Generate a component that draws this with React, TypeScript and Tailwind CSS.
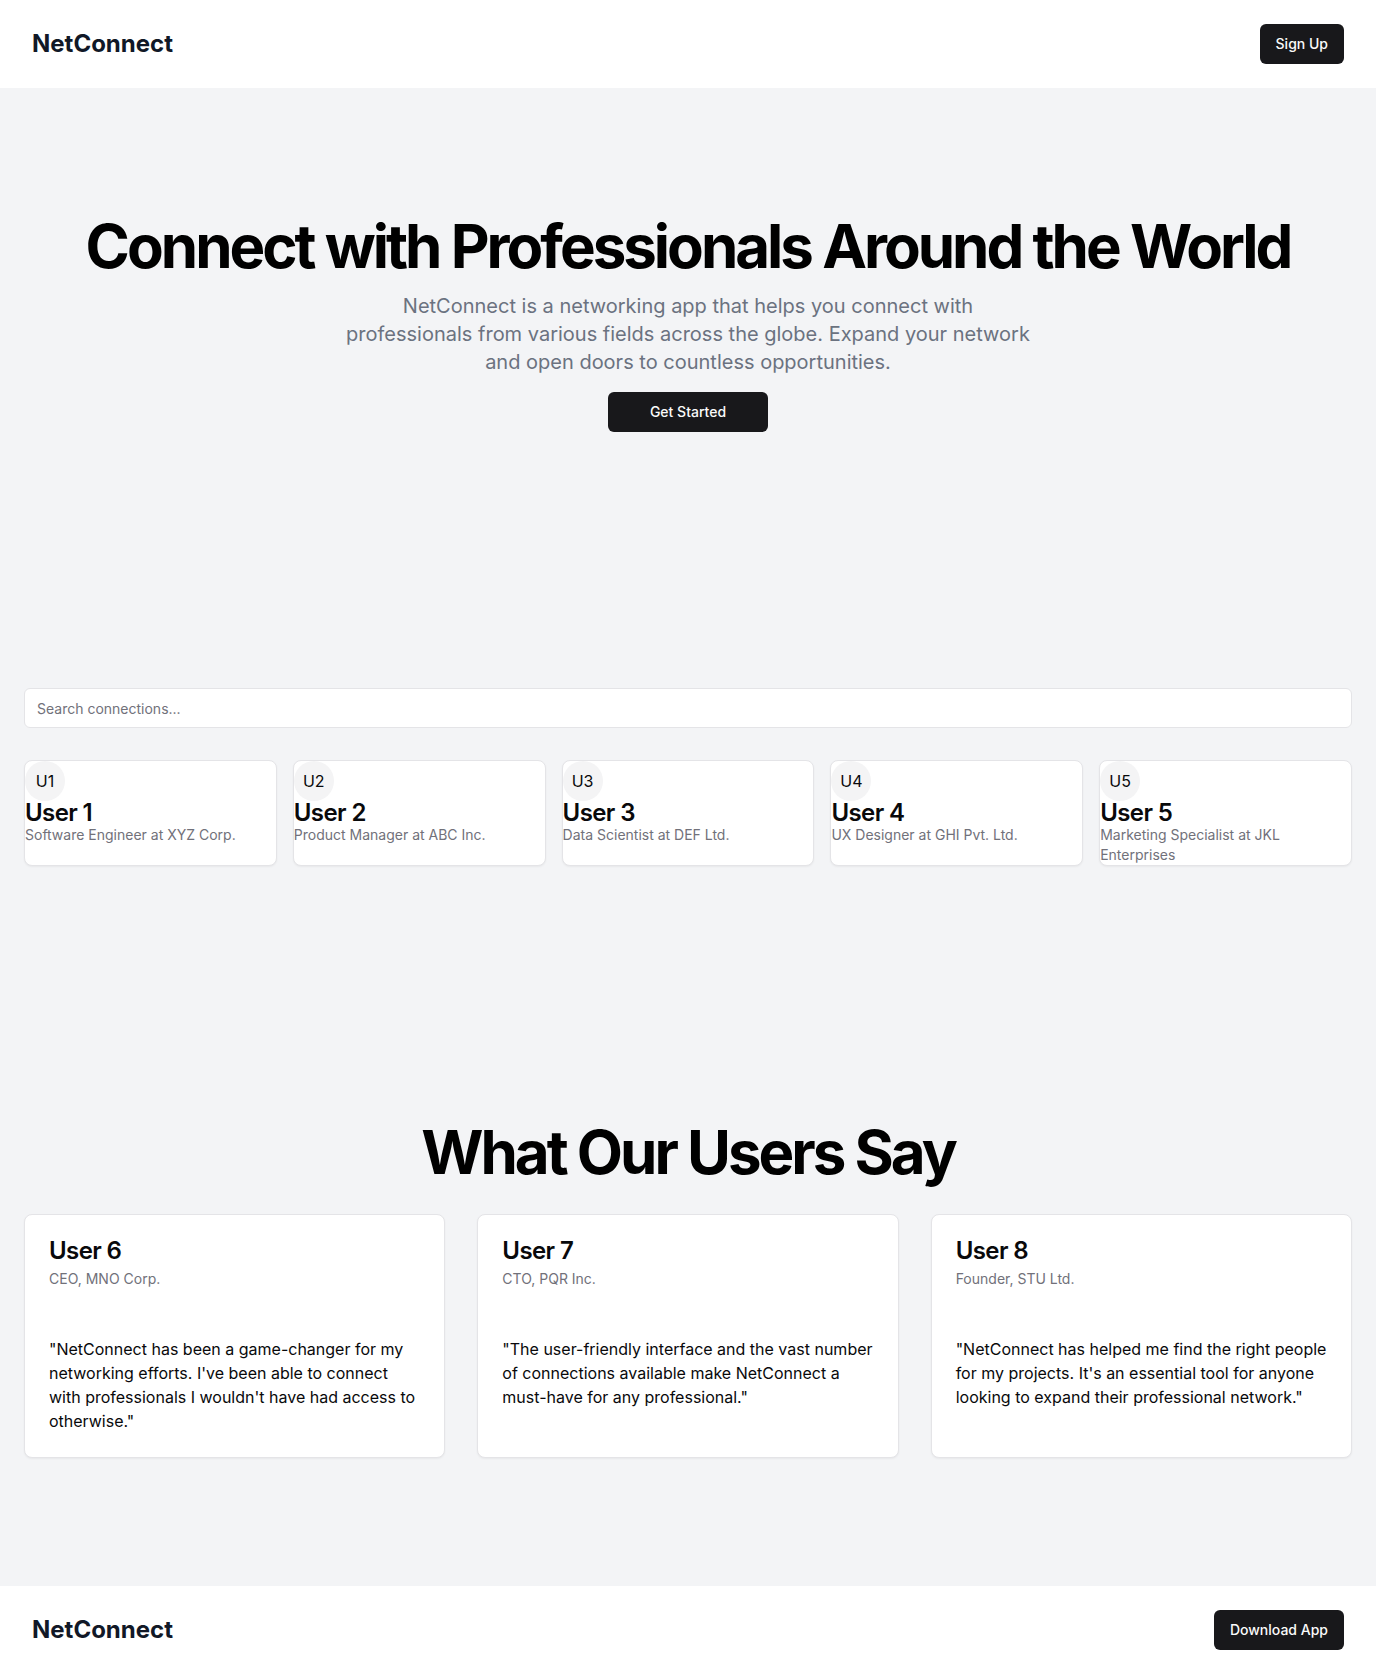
const people = [
  { id: "U1", name: "User 1", role: "Software Engineer at XYZ Corp." },
  { id: "U2", name: "User 2", role: "Product Manager at ABC Inc." },
  { id: "U3", name: "User 3", role: "Data Scientist at DEF Ltd." },
  { id: "U4", name: "User 4", role: "UX Designer at GHI Pvt. Ltd." },
  { id: "U5", name: "User 5", role: "Marketing Specialist at JKL Enterprises" },
];

const testimonials = [
  {
    name: "User 6",
    role: "CEO, MNO Corp.",
    quote:
      "\"NetConnect has been a game-changer for my networking efforts. I've been able to connect with professionals I wouldn't have had access to otherwise.\"",
  },
  {
    name: "User 7",
    role: "CTO, PQR Inc.",
    quote:
      "\"The user-friendly interface and the vast number of connections available make NetConnect a must-have for any professional.\"",
  },
  {
    name: "User 8",
    role: "Founder, STU Ltd.",
    quote:
      "\"NetConnect has helped me find the right people for my projects. It's an essential tool for anyone looking to expand their professional network.\"",
  },
];

const buttonClass =
  "inline-flex h-10 items-center justify-center rounded-md bg-[#18181b] py-2 text-sm font-medium text-[#fafafa]";
const cardClass = "rounded-lg border border-[#e4e4e7] bg-white text-[#09090b] shadow-xs";

export default function App() {
  return (
    <div className="flex flex-col bg-[#f3f4f6] font-['Inter',sans-serif] text-black">
      <header className="flex items-center justify-between bg-white px-8 py-6">
        <h1 className="text-2xl font-bold text-[#111827]">NetConnect</h1>
        <button type="button" className={`${buttonClass} px-4`}>Sign Up</button>
      </header>
      <main>
        <section className="px-6 py-32">
          <div className="flex flex-col items-center gap-4 text-center">
            <h2 className="text-6xl font-bold tracking-tighter">
              Connect with Professionals Around the World
            </h2>
            <p className="max-w-[700px] text-xl text-[#6b7280]">
              NetConnect is a networking app that helps you connect with professionals from various
              fields across the globe. Expand your network and open doors to countless opportunities.
            </p>
            <button type="button" className={`${buttonClass} w-40 px-4`}>Get Started</button>
          </div>
        </section>
        <section className="px-6 py-32">
          <input
            type="search"
            aria-label="Search connections"
            placeholder="Search connections..."
            className="mb-8 block h-10 w-full rounded-md border border-[#e4e4e7] bg-white px-3 py-2 text-sm placeholder:text-[#71717a]"
          />
          <div className="grid grid-cols-5 gap-4">
            {people.map((p) => (
              <article key={p.id} className={cardClass}>
                <div className="flex size-10 items-center justify-center rounded-full bg-[#f4f4f5]">
                  {p.id}
                </div>
                <h3 className="text-2xl leading-none font-semibold tracking-tight">{p.name}</h3>
                <p className="text-sm text-[#71717a]">{p.role}</p>
              </article>
            ))}
          </div>
        </section>
        <section className="px-6 py-32">
          <h2 className="mb-8 text-center text-6xl font-bold tracking-tighter">What Our Users Say</h2>
          <div className="grid grid-cols-3 gap-8">
            {testimonials.map((t) => (
              <article key={t.name} className={cardClass}>
                <div className="flex flex-col gap-1.5 p-6">
                  <h3 className="text-2xl leading-none font-semibold tracking-tight">{t.name}</h3>
                  <p className="text-sm text-[#71717a]">{t.role}</p>
                </div>
                <p className="p-6">{t.quote}</p>
              </article>
            ))}
          </div>
        </section>
      </main>
      <footer className="flex items-center justify-between bg-white px-8 py-6">
        <p className="text-2xl font-bold text-[#111827]">NetConnect</p>
        <button type="button" className={`${buttonClass} px-4`}>Download App</button>
      </footer>
    </div>
  );
}
